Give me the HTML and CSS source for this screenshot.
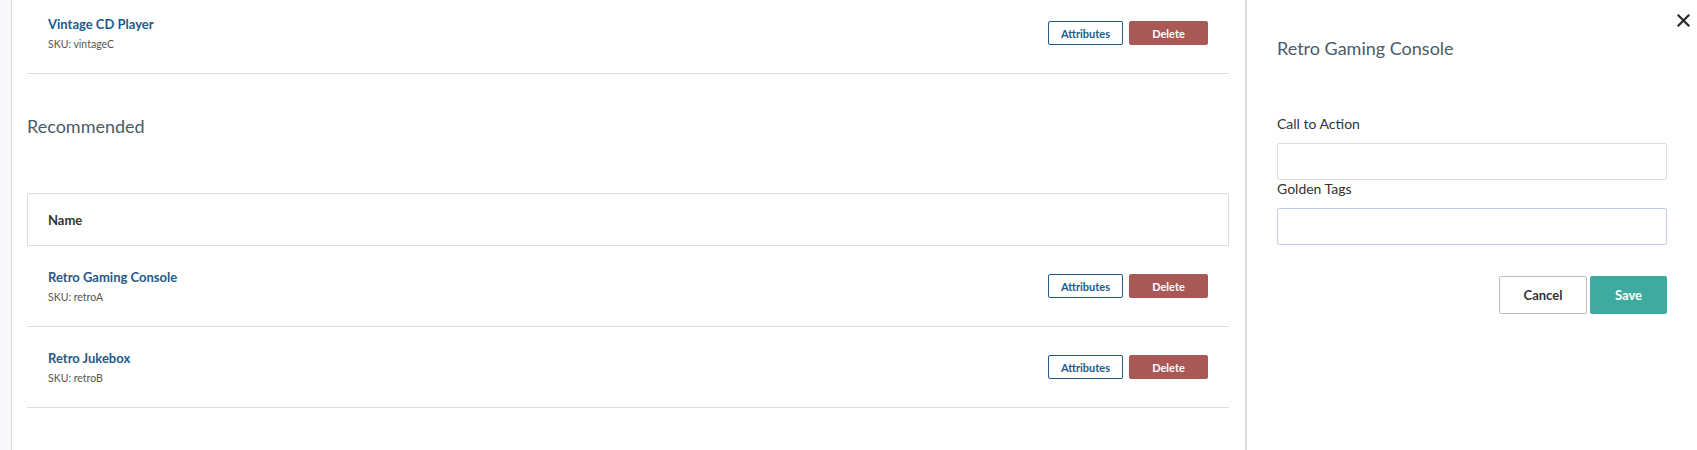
FILE: index.html
```html
<!DOCTYPE html>
<html>
<head>
<meta charset="utf-8">
<link rel="stylesheet" href="styles.css">
</head>
<body>
<div class="page">
  <div class="rail"></div>
  <main class="main">
    <div class="list">
      <div class="row">
        <div class="info">
          <a class="name">Vintage CD Player</a>
          <div class="sku">SKU: vintageC</div>
        </div>
        <div class="actions">
          <button class="btn-attr">Attributes</button>
          <button class="btn-del">Delete</button>
        </div>
      </div>
    </div>
    <h2 class="section-title">Recommended</h2>
    <div class="table-head">Name</div>
    <div class="list">
      <div class="row">
        <div class="info">
          <a class="name">Retro Gaming Console</a>
          <div class="sku">SKU: retroA</div>
        </div>
        <div class="actions">
          <button class="btn-attr">Attributes</button>
          <button class="btn-del">Delete</button>
        </div>
      </div>
      <div class="row">
        <div class="info">
          <a class="name">Retro Jukebox</a>
          <div class="sku">SKU: retroB</div>
        </div>
        <div class="actions">
          <button class="btn-attr">Attributes</button>
          <button class="btn-del">Delete</button>
        </div>
      </div>
    </div>
  </main>
  <aside class="panel">
    <button class="close" aria-label="Close">
      <svg width="13" height="13" viewBox="0 0 13 13"><path d="M1.5 1.5 L11.5 11.5 M11.5 1.5 L1.5 11.5" stroke="#2b2b2b" stroke-width="2.2" stroke-linecap="square"/></svg>
    </button>
    <h2 class="panel-title">Retro Gaming Console</h2>
    <label class="field-label">Call to Action</label>
    <input class="field" type="text">
    <label class="field-label tight">Golden Tags</label>
    <input class="field focus" type="text">
    <div class="panel-actions">
      <button class="btn-cancel">Cancel</button>
      <button class="btn-save">Save</button>
    </div>
  </aside>
</div>
</body>
</html>
```

FILE: styles.css
```css
* { box-sizing: border-box; }
html, body {
  margin: 0;
  padding: 0;
  height: 450px;
  overflow: hidden;
  background: #fff;
  font-family: Lato, "Open Sans", "Liberation Sans", sans-serif;
}
.page {
  display: flex;
  height: 450px;
}
.rail {
  width: 12px;
  flex: none;
  background: #f5f7fb;
  border-right: 1px solid #dcdcdc;
}
.main {
  width: 1233px;
  flex: none;
  padding: 0 16px 0 15px;
  margin-top: -7px;
}
.row {
  display: flex;
  align-items: center;
  justify-content: space-between;
  height: 81px;
  border-bottom: 1px solid #dedede;
  padding: 0 21px 0 21px;
}
.info {
  display: flex;
  flex-direction: column;
  gap: 6px;
}
.name {
  font-size: 13px;
  line-height: 16px;
  font-weight: 700;
  color: #235a8c;
}
.sku {
  font-size: 10.5px;
  line-height: 13px;
  color: #555;
}
.actions {
  display: flex;
  gap: 6px;
}
.actions button {
  height: 24px;
  font-family: inherit;
  font-size: 11px;
  font-weight: 700;
  border-radius: 2px;
  padding: 0;
  cursor: pointer;
}
.btn-attr {
  width: 75px;
  background: #fff;
  color: #235a8c;
  border: 1px solid #235a8c;
}
.btn-del {
  width: 79px;
  background: #a95856;
  color: #fff;
  border: 1px solid #a95856;
}
.section-title {
  margin: 41px 0 0 0;
  font-size: 18px;
  line-height: 22px;
  font-weight: 400;
  color: #4b5b68;
}
.table-head {
  margin-top: 56px;
  height: 53px;
  border: 1px solid #dedede;
  display: flex;
  align-items: center;
  padding-left: 20px;
  font-size: 13px;
  font-weight: 700;
  color: #333;
}
.panel {
  position: relative;
  flex: 1;
  border-left: 2px solid #dcdcdc;
  padding: 37px 30px 0 30px;
  display: flex;
  flex-direction: column;
}
.close {
  position: absolute;
  top: 14px;
  right: 7px;
  background: none;
  border: none;
  padding: 0;
  width: 13px;
  height: 13px;
  cursor: pointer;
}
.close svg { display: block; }
.panel-title {
  margin: 0;
  font-size: 18px;
  line-height: 22px;
  font-weight: 400;
  color: #4b5b68;
}
.field-label {
  margin-top: 56px;
  font-size: 14px;
  line-height: 17px;
  color: #333;
}
.field-label.tight { margin-top: 0; }
.field {
  margin-top: 11px;
  height: 37px;
  width: 100%;
  border: 1px solid #dcdcdc;
  border-radius: 2px;
  background: #fff;
  font-family: inherit;
  outline: none;
}
.field.focus { border-color: #c3cfe3; }
.panel-actions {
  margin-top: 31px;
  display: flex;
  justify-content: flex-end;
  gap: 3px;
}
.panel-actions button {
  height: 38px;
  font-family: inherit;
  font-size: 13px;
  font-weight: 700;
  border-radius: 2px;
  padding: 0;
  cursor: pointer;
}
.btn-cancel {
  width: 88px;
  background: #fff;
  color: #333;
  border: 1px solid #bdbdbd;
}
.btn-save {
  width: 77px;
  background: #3dab9f;
  color: #fff;
  border: 1px solid #3dab9f;
}
```
